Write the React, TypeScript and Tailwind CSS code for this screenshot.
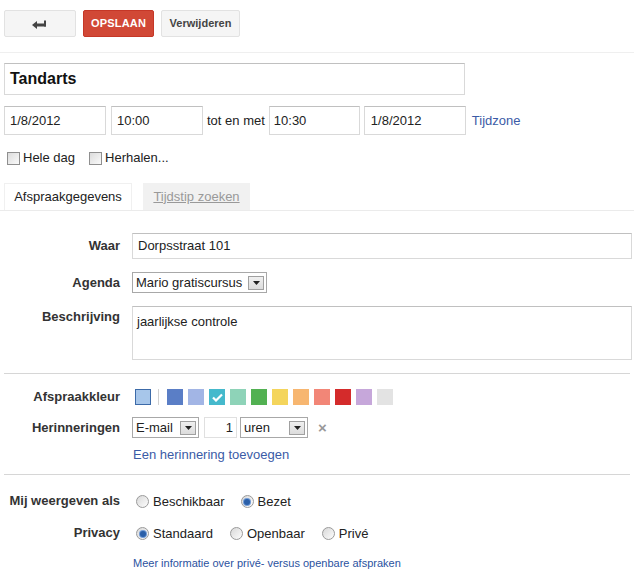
import React from "react";

const font = { fontFamily: '"Liberation Sans", Arial, sans-serif' };

function Arrow() {
  return (
    <div className="w-[16px] h-[14px] flex items-start justify-center bg-[linear-gradient(#f0f0f0,#dcdcdc)] border border-[#a0a0a0]">
      <svg width="7" height="4" viewBox="0 0 7 4" className="mt-[4px]">
        <path d="M0 0 L7 0 L3.5 4 Z" fill="#222" />
      </svg>
    </div>
  );
}

function Select({ value, width }: { value: string; width: string }) {
  return (
    <div
      className={`${width} h-[21px] border border-[#a8a8a8] bg-white flex items-center justify-between pl-[3px] pr-[2px] text-[13px] text-[#222]`}
    >
      <span>{value}</span>
      <Arrow />
    </div>
  );
}

function Checkbox({ label }: { label: string }) {
  return (
    <label className="flex items-center gap-[3px] text-[13px] text-[#222]">
      <span className="w-[13px] h-[13px] border border-[#8f8f8f] bg-[linear-gradient(135deg,#dcdcdc,#fafafa)]" />
      {label}
    </label>
  );
}

function Radio({ label, checked }: { label: string; checked?: boolean }) {
  return (
    <label className="flex items-center gap-[4px] text-[13px] text-[#222]">
      <span className="w-[13px] h-[13px] rounded-full border border-[#9a9a9a] bg-[linear-gradient(135deg,#d8d8d8,#fdfdfd)] flex items-center justify-center">
        {checked && <span className="w-[6px] h-[6px] rounded-full bg-[#2a5fa8] shadow-[0_0_0_1px_#6f9ad6]" />}
      </span>
      {label}
    </label>
  );
}

const swatches = [
  "#5a7ec6",
  "#a2b5e5",
  "#45b9cc",
  "#8ed3b8",
  "#52b152",
  "#f4d55c",
  "#f7b670",
  "#f28677",
  "#d42b2b",
  "#c6a7da",
  "#e3e3e3",
];

export default function App() {
  return (
    <div style={font} className="w-[634px] h-[581px] bg-white text-[13px] text-[#222] overflow-hidden">
      {/* Knoppen */}
      <div className="flex gap-[7px] pl-[4px] pt-[10px]">
        <button className="w-[72px] h-[27px] rounded-[2px] border border-[#e2e2e2] bg-[#f5f5f5] flex items-center justify-center">
          <svg width="16" height="10" viewBox="0 0 16 10">
            <path d="M0 6 L5 2 L5 10 Z" fill="#444" />
            <rect x="4" y="4.5" width="10" height="3" fill="#444" />
            <rect x="12" y="1.5" width="2" height="6" fill="#444" />
          </svg>
        </button>
        <button className="w-[71px] h-[27px] rounded-[2px] bg-[#d14836] border border-[#c53727] text-white text-[11px] font-bold tracking-[0.2px]">
          OPSLAAN
        </button>
        <button className="w-[79px] h-[27px] rounded-[2px] border border-[#e2e2e2] bg-[#f5f5f5] text-[11px] font-bold text-[#444]">
          Verwijderen
        </button>
      </div>
      <div className="mt-[15px] border-t border-[#efefef]" />

      {/* Titel */}
      <div className="ml-[4px] mt-[10px] w-[461px] h-[32px] border border-[#d9d9d9] border-t-[#c0c0c0] flex items-center pl-[5px] text-[16px] font-bold text-[#111]">
        Tandarts
      </div>

      {/* Datum en tijd */}
      <div className="flex items-center mt-[11px] pl-[4px] h-[29px]">
        <div className="w-[102px] h-[29px] border border-[#d9d9d9] border-t-[#c0c0c0] flex items-center pl-[5px]">1/8/2012</div>
        <div className="ml-[5px] w-[92px] h-[29px] border border-[#d9d9d9] border-t-[#c0c0c0] flex items-center pl-[5px]">10:00</div>
        <span className="ml-[4px] mr-[4px]">tot en met</span>
        <div className="w-[91px] h-[29px] border border-[#d9d9d9] border-t-[#c0c0c0] flex items-center pl-[4px]">10:30</div>
        <div className="ml-[4px] w-[102px] h-[29px] border border-[#d9d9d9] border-t-[#c0c0c0] flex items-center pl-[6px]">1/8/2012</div>
        <span className="ml-[6px] text-[#3b5ba6]">Tijdzone</span>
      </div>

      {/* Opties */}
      <div className="flex items-center gap-[14px] mt-[15px] pl-[7px] h-[16px]">
        <Checkbox label="Hele dag" />
        <Checkbox label="Herhalen..." />
      </div>

      {/* Tabs */}
      <div className="mt-[18px] flex items-end gap-[11px] pl-[4px] border-b border-[#ebebeb] h-[27px]">
        <div className="w-[128px] h-[27px] bg-white border border-b-0 border-[#f0f0f0] flex items-center justify-center text-[13px] text-[#222]">
          Afspraakgegevens
        </div>
        <div className="w-[107px] h-[27px] bg-[#f1f1f1] flex items-center justify-center text-[13px] text-[#999] underline">
          Tijdstip zoeken
        </div>
      </div>

      {/* Formulier */}
      <div className="grid grid-cols-[116px_1fr] gap-x-[12px] pl-[4px] mt-[22px]">
        <div className="h-[26px] flex items-center justify-end font-bold text-[#333]">Waar</div>
        <div className="w-[500px] h-[26px] border border-[#d9d9d9] border-t-[#c0c0c0] flex items-center pl-[5px]">
          Dorpsstraat 101
        </div>

        <div className="mt-[13px] h-[21px] flex items-center justify-end font-bold text-[#333]">Agenda</div>
        <div className="mt-[13px]">
          <Select value="Mario gratiscursus" width="w-[135px]" />
        </div>

        <div className="mt-[13px] pt-[1px] flex justify-end font-bold text-[#333]">Beschrijving</div>
        <div className="mt-[13px] w-[500px] h-[54px] border border-[#d9d9d9] border-t-[#c0c0c0] pl-[4px] pt-[5px]">
          jaarlijkse controle
        </div>
      </div>

      <div className="ml-[4px] w-[626px] mt-[13px] border-t border-[#d6d6d6]" />

      <div className="grid grid-cols-[116px_1fr] gap-x-[12px] pl-[4px] mt-[15px]">
        <div className="h-[16px] flex items-center justify-end font-bold text-[#333]">Afspraakkleur</div>
        <div className="flex items-center h-[16px] pl-[3px]">
          <span className="w-[16px] h-[16px] border border-[#3c6aa8] bg-[#a7c6ea]" />
          <span className="ml-[7px] w-px h-[16px] bg-[#d0d0d0]" />
          <div className="ml-[8px] flex gap-[5px]">
            {swatches.map((c, i) => (
              <span key={c} className="w-[16px] h-[16px] flex items-center justify-center" style={{ backgroundColor: c }}>
                {i === 2 && (
                  <svg width="11" height="9" viewBox="0 0 11 9">
                    <path d="M1 4.5 L4 7.5 L10 1.5" stroke="white" strokeWidth="2.2" fill="none" />
                  </svg>
                )}
              </span>
            ))}
          </div>
        </div>

        <div className="mt-[12px] h-[21px] flex items-center justify-end font-bold text-[#333]">Herinneringen</div>
        <div className="mt-[12px] flex items-center h-[21px]">
          <Select value="E-mail" width="w-[67px]" />
          <div className="ml-[5px] w-[33px] h-[21px] border border-[#e0e0e0] flex items-center justify-end pr-[3px]">1</div>
          <div className="ml-[3px]">
            <Select value="uren" width="w-[68px]" />
          </div>
          <span className="ml-[10px] text-[#999] text-[15px] font-bold leading-none">×</span>
        </div>

        <div />
        <div className="mt-[7px] pl-[1px] text-[#3b5ba6]">Een herinnering toevoegen</div>
      </div>

      <div className="ml-[4px] w-[626px] mt-[9px] border-t border-[#d6d6d6]" />

      <div className="grid grid-cols-[116px_1fr] gap-x-[12px] pl-[4px] mt-[16px]">
        <div className="h-[18px] flex items-start justify-end font-bold text-[#333] whitespace-nowrap">Mij weergeven als</div>
        <div className="flex items-center gap-[16px] h-[18px] pl-[4px] pt-[4px]">
          <Radio label="Beschikbaar" />
          <Radio label="Bezet" checked />
        </div>

        <div className="mt-[14px] h-[18px] flex items-start justify-end font-bold text-[#333]">Privacy</div>
        <div className="mt-[14px] flex items-center gap-[17px] h-[18px] pl-[4px] pt-[4px]">
          <Radio label="Standaard" checked />
          <Radio label="Openbaar" />
          <Radio label="Privé" />
        </div>

        <div />
        <div className="mt-[14px] pl-[1px] text-[11px] text-[#2b52a0]">
          Meer informatie over privé- versus openbare afspraken
        </div>
      </div>
    </div>
  );
}
